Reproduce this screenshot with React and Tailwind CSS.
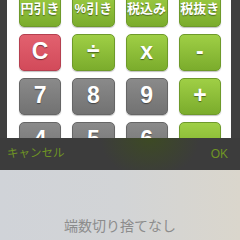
import React from "react";

const rows = [
  [
    { label: "円引き", tone: "green", small: true },
    { label: "%引き", tone: "green", small: true },
    { label: "税込み", tone: "green", small: true },
    { label: "税抜き", tone: "green", small: true },
  ],
  [
    { label: "C", tone: "red" },
    { label: "÷", tone: "green" },
    { label: "x", tone: "green" },
    { label: "-", tone: "green" },
  ],
  [
    { label: "7", tone: "gray" },
    { label: "8", tone: "gray" },
    { label: "9", tone: "gray" },
    { label: "+", tone: "green" },
  ],
  [
    { label: "4", tone: "gray" },
    { label: "5", tone: "gray" },
    { label: "6", tone: "gray" },
    { label: "", tone: "green" },
  ],
];

const tones = {
  green: "bg-gradient-to-b from-[#9fcf45] to-[#7bac2c] border-[#6e9a2a]",
  red: "bg-gradient-to-b from-[#e2616f] to-[#d24a5a] border-[#b54050]",
  gray: "bg-gradient-to-b from-[#8a8a8a] to-[#727272] border-[#666666]",
};

function Key({ label, tone, small }) {
  return (
    <div
      className={`h-[37px] rounded-[5px] border flex items-center justify-center text-white font-bold [text-shadow:0_1px_1px_rgba(0,0,0,0.45)] shadow-[0_1px_1px_rgba(0,0,0,0.25)] ${tones[tone]} ${
        small ? "text-[13px] items-end pb-[8px]" : "text-[23px] pb-[3px]"
      }`}
    >
      {label}
    </div>
  );
}

export default function App() {
  return (
    <div className="w-[240px] h-[240px] overflow-hidden flex flex-col bg-white font-['Liberation_Sans','Noto_Sans_CJK_JP',sans-serif]">
      <div className="h-[138px] overflow-hidden flex">
        <div className="w-[7px] bg-[#3f3f3f]" />
        <div className="flex-1 pl-[12px] pr-[10px] -mt-[10px] flex flex-col gap-[7px]">
          {rows.map((row, i) => (
            <div key={i} className="grid grid-cols-4 gap-x-[11px]">
              {row.map((k, j) => (
                <Key key={j} {...k} />
              ))}
            </div>
          ))}
        </div>
        <div className="w-[9px] bg-[#3f3f3f]" />
      </div>
      <div className="h-[32px] flex items-center justify-between px-[7px] bg-[radial-gradient(ellipse_50px_40px_at_150px_0px,#3d4a24,#3c3c3c)] text-[11.5px] text-[#6f9424]">
        <span>キャンセル</span>
        <span className="text-[12px] mr-[5px]">OK</span>
      </div>
      <div className="flex-1 bg-gradient-to-r from-[#d0d3d8] via-[#d2d4d6] to-[#dad6cc] flex items-end justify-center pb-[3px]">
        <span className="text-[14px] text-[#8c8c8c]">端数切り捨てなし</span>
      </div>
    </div>
  );
}
